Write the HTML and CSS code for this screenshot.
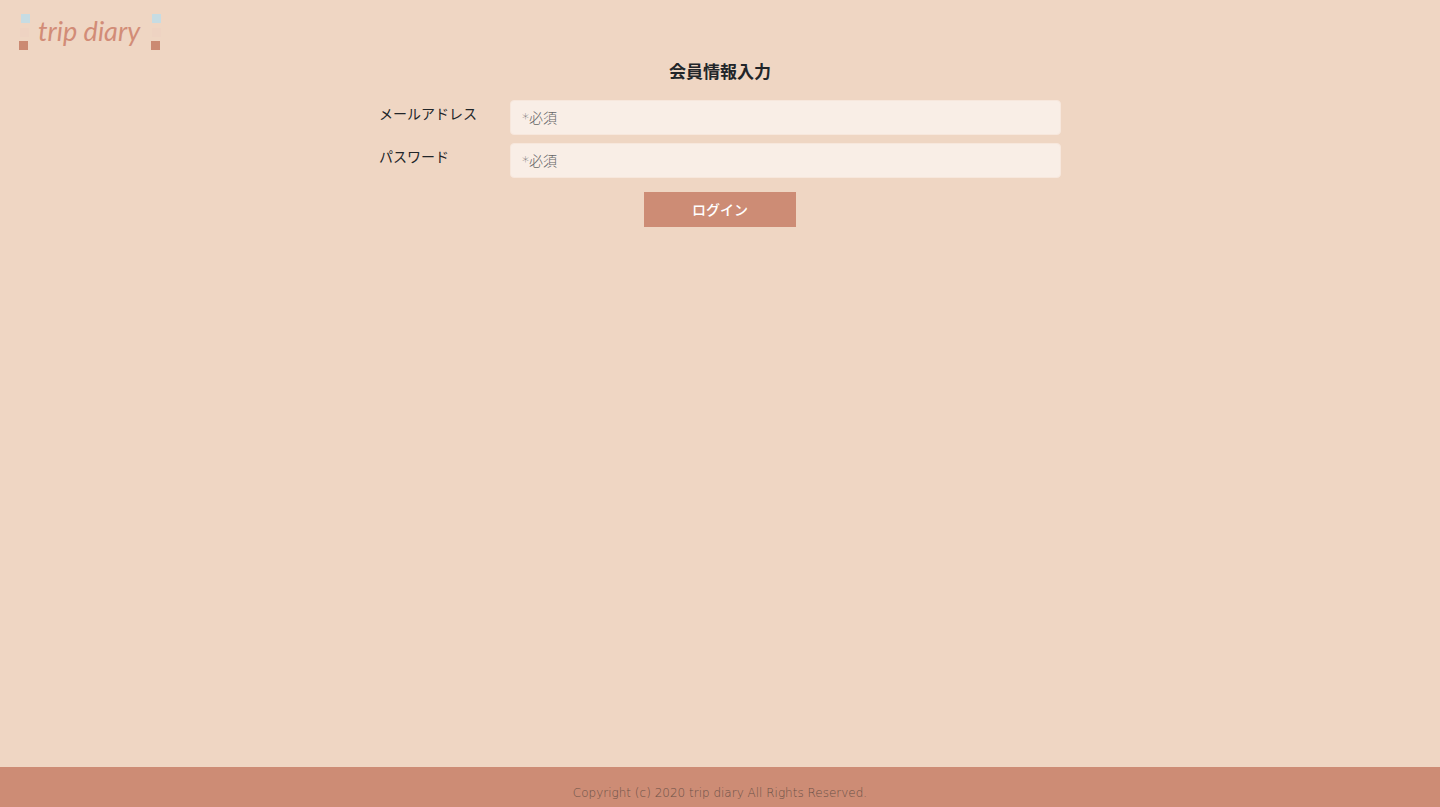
FILE: index.html
```html
<!DOCTYPE html>
<html lang="ja">
<head>
  <meta charset="utf-8">
  <meta name="viewport" content="width=device-width, initial-scale=1">
  <title>trip diary</title>
  <link rel="stylesheet" href="styles.css">
</head>
<body>
  <header class="header">
    <a class="logo" href="#">
      <svg class="logo-art" viewBox="0 0 144 44" role="img" aria-label="trip diary">
        <rect class="sky" x="2" y="4" width="9" height="9"/>
        <rect class="sand" x="1" y="18" width="9" height="9"/>
        <rect class="clay" x="0" y="31" width="9" height="9"/>
        <text class="wordmark" x="19" y="31">trip diary</text>
        <rect class="sky" x="133" y="4" width="9" height="9"/>
        <rect class="sand" x="133" y="18" width="9" height="9"/>
        <rect class="clay" x="132" y="31" width="9" height="9"/>
      </svg>
    </a>
  </header>
  <main class="main">
    <h1 class="title">会員情報入力</h1>
    <form class="form">
      <div class="row">
        <label class="label" for="email">メールアドレス</label>
        <input class="field" id="email" type="email" placeholder="*必須">
      </div>
      <div class="row">
        <label class="label" for="password">パスワード</label>
        <input class="field" id="password" type="password" placeholder="*必須">
      </div>
      <button class="submit" type="submit">ログイン</button>
    </form>
  </main>
  <footer class="footer">
    <small class="copyright">Copyright (c) 2020 trip diary All Rights Reserved.</small>
  </footer>
</body>
</html>
```
FILE: styles.css
```css
* {
  box-sizing: border-box;
}

body {
  display: flex;
  flex-direction: column;
  min-height: 100vh;
  margin: 0;
  background: #efd6c3;
  color: #212529;
  font-family: "Noto Sans CJK JP", sans-serif;
  font-size: 14px;
  line-height: 20px;
}

.header {
  display: flex;
  padding: 10px 19px 5px;
}

.logo,
.logo-art {
  display: block;
}

.logo-art {
  width: 144px;
  height: 44px;
}

.sky {
  fill: #c6dce3;
}

.sand {
  fill: #eed3c2;
}

.clay {
  fill: #cb8a72;
}

.wordmark {
  fill: #d28c77;
  font-family: Lato, sans-serif;
  font-size: 27px;
  font-style: italic;
  font-weight: 400;
}

.main {
  flex: 1;
  width: 100%;
  max-width: 682px;
  margin: 0 auto;
}

.title {
  margin: 0 0 17px;
  font-size: 17px;
  font-weight: 700;
  line-height: 24px;
  text-align: center;
}

.form {
  display: flex;
  flex-direction: column;
  gap: 8px;
}

.row {
  display: grid;
  grid-template-columns: 131px 1fr;
}

.label {
  padding-top: 3px;
}

.field {
  width: 100%;
  height: 35px;
  padding: 0 11px;
  border: 1px solid #f7e7dc;
  border-radius: 4px;
  background: #f9eee6;
  color: #212529;
  font-family: "DejaVu Sans", "Noto Sans CJK JP", sans-serif;
  font-size: 14px;
}

.field::placeholder {
  color: #666;
  font-weight: 300;
  opacity: 1;
}

.submit {
  align-self: center;
  width: 152px;
  height: 35px;
  margin-top: 6px;
  padding: 0 0 2px;
  border: 0;
  background: #cd8c75;
  color: #fff;
  font: inherit;
  font-weight: 500;
}

.footer {
  padding: 16px 16px 4px;
  background: #cd8c75;
  text-align: center;
}

.copyright {
  display: block;
  color: #6b5147;
  font-family: "DejaVu Sans", sans-serif;
  font-size: 12px;
  font-weight: 200;
}
```
